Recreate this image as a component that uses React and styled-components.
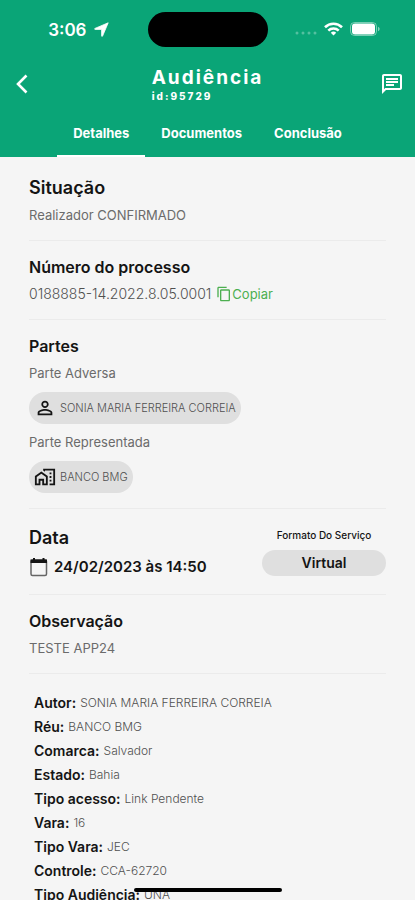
import React, { useState } from 'react';
import styled, { createGlobalStyle } from 'styled-components';
import {
    MdOutlineChat,
    MdOutlineContentCopy,
    MdPersonOutline,
    MdOutlineMapsHomeWork,
} from 'react-icons/md';

const tabs = ['Detalhes', 'Documentos', 'Conclusão'];

const details = [
    ['Autor', 'SONIA MARIA FERREIRA CORREIA'],
    ['Réu', 'BANCO BMG'],
    ['Comarca', 'Salvador'],
    ['Estado', 'Bahia'],
    ['Tipo acesso', 'Link Pendente'],
    ['Vara', '16'],
    ['Tipo Vara', 'JEC'],
    ['Controle', 'CCA-62720'],
    ['Tipo Audiência', 'UNA'],
];

const processNumber = '0188885-14.2022.8.05.0001';

function StatusBar() {
    return (
        <StatusRow>
            <Clock>
                3:06
                <svg width='15' height='15' viewBox='0 0 15 15'>
                    <path d='M14.2 0.8 8.6 14c-.3.6-1 .5-1-.2V7.4H1.2c-.7 0-.8-.8-.2-1z' fill='#fff' stroke='#fff' strokeWidth='.8' strokeLinejoin='round' />
                </svg>
            </Clock>
            <Island />
            <Signals>
                <svg width='22' height='14' viewBox='0 0 22 14' fill='#fff' opacity='.3'>
                    <circle cx='2' cy='11' r='1.5' />
                    <circle cx='8' cy='11' r='1.5' />
                    <circle cx='14' cy='11' r='1.5' />
                    <circle cx='20' cy='11' r='1.5' />
                </svg>
                <svg width='19' height='14' viewBox='0 0 19 14' fill='none' stroke='#fff' strokeWidth='2.6'>
                    <path d='M1 5.2a12.2 12.2 0 0 1 17 0' />
                    <path d='M4.3 8.6a7.5 7.5 0 0 1 10.4 0' />
                    <path d='M9.5 13.6 6.8 10.8a3.9 3.9 0 0 1 5.4 0z' fill='#fff' stroke='none' />
                </svg>
                <svg width='31' height='14' viewBox='0 0 31 14'>
                    <rect x='.5' y='.5' width='26' height='13' rx='4' fill='none' stroke='#fff' opacity='.45' />
                    <rect x='2' y='1.5' width='23' height='11' rx='3' fill='#fff' />
                    <path d='M28 4.8c2.2.8 2.2 3.6 0 4.4z' fill='#fff' opacity='.5' />
                </svg>
            </Signals>
        </StatusRow>
    );
}

function CalendarIcon() {
    return (
        <svg width='20' height='20' viewBox='0 0 20 20' fill='none'>
            <rect x='2' y='3' width='15.5' height='15.5' rx='1.5' stroke='#666' strokeWidth='1.5' />
            <path d='M1.5 2.5h16.500V6H1.5z' fill='#141414' />
            <path d='M5 1v2M14.5 1v2' stroke='#141414' strokeWidth='2' />
        </svg>
    );
}

function App() {
    const [activeTab, setActiveTab] = useState(tabs[0]);

    const handleCopy = () => {
        navigator.clipboard?.writeText(processNumber);
    }

    return (
        <Screen>
            <GlobalStyle />
            <Header>
                <StatusBar />
                <AppBar>
                    <IconButton aria-label='Voltar'>
                        <svg width='24' height='24' viewBox='0 0 24 24' fill='none' stroke='#fff' strokeWidth='2.6'>
                            <path d='M15.5 3.5 7 12l8.5 8.5' />
                        </svg>
                    </IconButton>
                    <TitleBox>
                        <Title>Audiência</Title>
                        <TitleId>id:95729</TitleId>
                    </TitleBox>
                    <IconButton aria-label='Mensagens' $end>
                        <MdOutlineChat size={24} />
                    </IconButton>
                </AppBar>
                <Tabs role='tablist'>
                    {tabs.map((tab) => (
                        <Tab key={tab} role='tab' aria-selected={tab === activeTab} $active={tab === activeTab} onClick={() => setActiveTab(tab)}>
                            {tab}
                        </Tab>
                    ))}
                </Tabs>
            </Header>

            <Content>
                <Section $first>
                    <Heading $large>Situação</Heading>
                    <Text>Realizador CONFIRMADO</Text>
                </Section>

                <Section>
                    <Heading>Número do processo</Heading>
                    <Line>
                        <Text $large>{processNumber}</Text>
                        <CopyButton onClick={handleCopy}>
                            <MdOutlineContentCopy size={16} />
                            Copiar
                        </CopyButton>
                    </Line>
                </Section>

                <Section>
                    <Heading>Partes</Heading>
                    <Text>Parte Adversa</Text>
                    <Chip>
                        <ChipIcon><MdPersonOutline size={22} /></ChipIcon>
                        SONIA MARIA FERREIRA CORREIA
                    </Chip>
                    <Text>Parte Representada</Text>
                    <Chip>
                        <ChipIcon><MdOutlineMapsHomeWork size={22} /></ChipIcon>
                        BANCO BMG
                    </Chip>
                </Section>

                <Section>
                    <DateRow>
                        <DateBox>
                            <Heading $large>Data</Heading>
                            <DateText>
                                <CalendarIcon />
                                24/02/2023 às 14:50
                            </DateText>
                        </DateBox>
                        <Format>
                            <FormatLabel>Formato Do Serviço</FormatLabel>
                            <FormatValue>Virtual</FormatValue>
                        </Format>
                    </DateRow>
                </Section>

                <Section>
                    <Heading>Observação</Heading>
                    <Text>TESTE APP24</Text>
                </Section>

                <DetailList>
                    {details.map(([label, value]) => (
                        <Detail key={label}>
                            <dt>{label}:</dt>
                            <dd>{value}</dd>
                        </Detail>
                    ))}
                </DetailList>
            </Content>
            <HomeIndicator />
        </Screen>
    );
}

export default App;

const GlobalStyle = createGlobalStyle`
    * {
        box-sizing: border-box;
    }

    body {
        margin: 0;
        background-color: #f5f5f5;
        font-family: Inter, 'Liberation Sans', sans-serif;
        color: #141414;
    }

    button {
        font-family: inherit;
        border: none;
        background: none;
        padding: 0;
        cursor: pointer;
    }
`;

const Screen = styled.div`
    height: 100vh;
    display: flex;
    flex-direction: column;
    overflow: hidden;
`;

const Header = styled.header`
    flex-shrink: 0;
    background-color: #0aa577;
    color: #fff;
`;

const StatusRow = styled.div`
    height: 59px;
    display: grid;
    grid-template-columns: 1fr 120px 1fr;
    align-items: center;
`;

const Clock = styled.div`
    display: flex;
    align-items: center;
    justify-content: flex-end;
    gap: 7px;
    padding-right: 39px;
    font-size: 17px;
    font-weight: 600;
`;

const Island = styled.div`
    height: 35px;
    border-radius: 18px;
    background-color: #000;
`;

const Signals = styled.div`
    display: flex;
    align-items: center;
    gap: 7px;
    padding: 0 0 2px 27px;
`;

const AppBar = styled.div`
    height: 50px;
    display: grid;
    grid-template-columns: 1fr auto 1fr;
    align-items: center;
    padding: 0 11px;
`;

const IconButton = styled.button`
    display: flex;
    color: #fff;
    justify-self: ${({ $end }) => $end ? 'end' : 'start'};
`;

const TitleBox = styled.div`
    display: flex;
    flex-direction: column;
    padding-top: 2px;
`;

const Title = styled.h1`
    margin: 0;
    font-size: 19px;
    line-height: 22px;
    font-weight: 700;
    letter-spacing: 2px;
`;

const TitleId = styled.span`
    font-size: 10px;
    line-height: 14px;
    font-weight: 800;
    letter-spacing: 2px;
`;

const Tabs = styled.div`
    height: 48px;
    display: flex;
    justify-content: center;
`;

const Tab = styled.button`
    padding: 2px 16px 0;
    color: #fff;
    font-size: 13px;
    font-weight: 700;
    border-bottom: 2px solid ${({ $active }) => $active ? '#fff' : 'transparent'};
`;

const Content = styled.main`
    flex: 1;
    padding: 0 29px;
    overflow-y: auto;
    scrollbar-width: none;
`;

const Section = styled.section`
    padding: ${({ $first }) => $first ? '21px' : '16px'} 0 15px;
    border-bottom: 1px solid #ebebeb;
`;

const Heading = styled.h2`
    margin: 0 0 7px;
    font-size: ${({ $large }) => $large ? '18px' : '16px'};
    line-height: 20px;
    font-weight: 600;
`;

const Text = styled.p`
    margin: 0;
    font-size: ${({ $large }) => $large ? '14px' : '13px'};
    line-height: 20px;
    font-weight: ${({ $large }) => $large ? 300 : 400};
    color: ${({ $large }) => $large ? '#505050' : '#6b6b6b'};
`;

const Line = styled.div`
    display: flex;
    align-items: center;
    gap: 5px;
`;

const CopyButton = styled.button`
    display: flex;
    align-items: center;
    color: #4caf50;
    font-size: 13px;
    line-height: 20px;
`;

const Chip = styled.div`
    width: fit-content;
    height: 32px;
    margin: 9px 0 8px;
    padding: 0 5px;
    display: flex;
    align-items: center;
    gap: 4px;
    border-radius: 16px;
    background-color: #dfdfdf;
    color: #505050;
    font-size: 11px;
    font-weight: 300;

    &:last-child {
        margin-bottom: 0;
    }
`;

const ChipIcon = styled.span`
    display: flex;
    color: #141414;
`;

const DateRow = styled.div`
    display: flex;
    justify-content: space-between;
`;

const DateBox = styled.div`
    padding-top: 3px;
`;

const DateText = styled.div`
    display: flex;
    align-items: center;
    gap: 5px;
    font-size: 15px;
    line-height: 24px;
    font-weight: 600;
`;

const Format = styled.div`
    width: 124px;
    text-align: center;
`;

const FormatLabel = styled.div`
    font-size: 10px;
    line-height: 20px;
    font-weight: 500;
`;

const FormatValue = styled.div`
    margin-top: 5px;
    border-radius: 13px;
    background-color: #dfdfdf;
    font-size: 14px;
    line-height: 26px;
    font-weight: 600;
`;

const DetailList = styled.dl`
    margin: 0;
    padding: 17px 5px;
`;

const Detail = styled.div`
    display: flex;
    gap: 4px;
    line-height: 24px;

    dt {
        font-size: 14px;
        font-weight: 600;
    }

    dd {
        margin: 0;
        font-size: 12px;
        font-weight: 300;
        color: #505050;
    }
`;

const HomeIndicator = styled.div`
    position: fixed;
    bottom: 8px;
    left: 50%;
    width: 148px;
    height: 4px;
    margin-left: -74px;
    border-radius: 2px;
    background-color: #000;
`;
